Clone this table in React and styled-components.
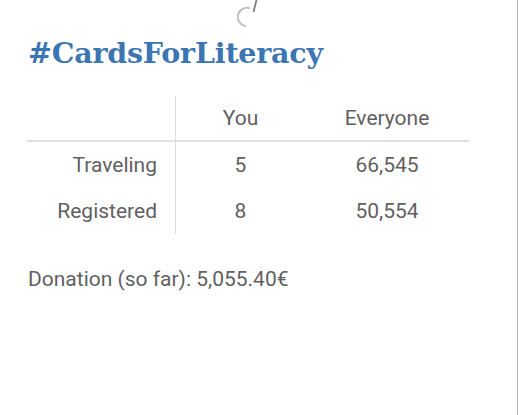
import styled, { createGlobalStyle } from "styled-components";

const GlobalStyle = createGlobalStyle`
  html, body {
    margin: 0;
    padding: 0;
    background: #ffffff;
  }
  body {
    font-family: Roboto, "Liberation Sans", sans-serif;
  }
`;

const rows = [
  { label: "Traveling", you: "5", everyone: "66,545" },
  { label: "Registered", you: "8", everyone: "50,554" },
];

export default function App() {
  return (
    <>
      <GlobalStyle />
      <Screen>
        <Refresh>
          <svg width="26" height="30" viewBox="0 0 26 30">
            <path
              d="M12 8 A9 9 0 0 0 8 26"
              fill="none"
              stroke="#c4c4c4"
              strokeWidth="2.2"
              strokeLinecap="round"
            />
            <path d="M19.5 0 L16.5 12" stroke="#808080" strokeWidth="1.8" />
          </svg>
        </Refresh>
        <Content>
          <Title>#CardsForLiteracy</Title>
          <Stats>
            <Corner />
            <Head>You</Head>
            <Head>Everyone</Head>
            {rows.map((r) => (
              <Row key={r.label}>
                <Label>{r.label}</Label>
                <Cell>{r.you}</Cell>
                <Cell>{r.everyone}</Cell>
              </Row>
            ))}
          </Stats>
          <Donation>Donation (so far): 5,055.40€</Donation>
        </Content>
      </Screen>
    </>
  );
}

const Screen = styled.div`
  position: relative;
  width: 517px;
  height: 415px;
  border-right: 1px solid #b5b5b5;
  background: #ffffff;
  overflow: hidden;
`;

const Refresh = styled.div`
  position: absolute;
  top: 0;
  left: 237px;
`;

const Content = styled.div`
  padding: 33px 48px 0 27px;
  display: flex;
  flex-direction: column;
`;

const Title = styled.h1`
  margin: 0 0 0 1px;
  font-family: "DejaVu Serif", "Liberation Serif", serif;
  font-weight: bold;
  font-size: 28.5px;
  letter-spacing: -0.2px;
  line-height: 40px;
  color: #3b76b3;
`;

const Stats = styled.div`
  margin-top: 23px;
  display: grid;
  grid-template-columns: 149px 129px 164px;
  grid-auto-rows: 46px;
  font-size: 21px;
  color: #616161;
`;

const Row = styled.div`
  display: contents;
`;

const Corner = styled.div`
  border-right: 1px solid #dcdcdc;
  border-bottom: 2px solid #e0e0e0;
`;

const Head = styled.div`
  display: flex;
  align-items: center;
  justify-content: center;
  border-bottom: 2px solid #e0e0e0;
`;

const Label = styled.div`
  display: flex;
  align-items: center;
  justify-content: flex-end;
  padding-right: 18px;
  border-right: 1px solid #dcdcdc;
`;

const Cell = styled.div`
  display: flex;
  align-items: center;
  justify-content: center;
`;

const Donation = styled.div`
  margin-top: 33px;
  margin-left: 1px;
  font-size: 21px;
  color: #616161;
`;
